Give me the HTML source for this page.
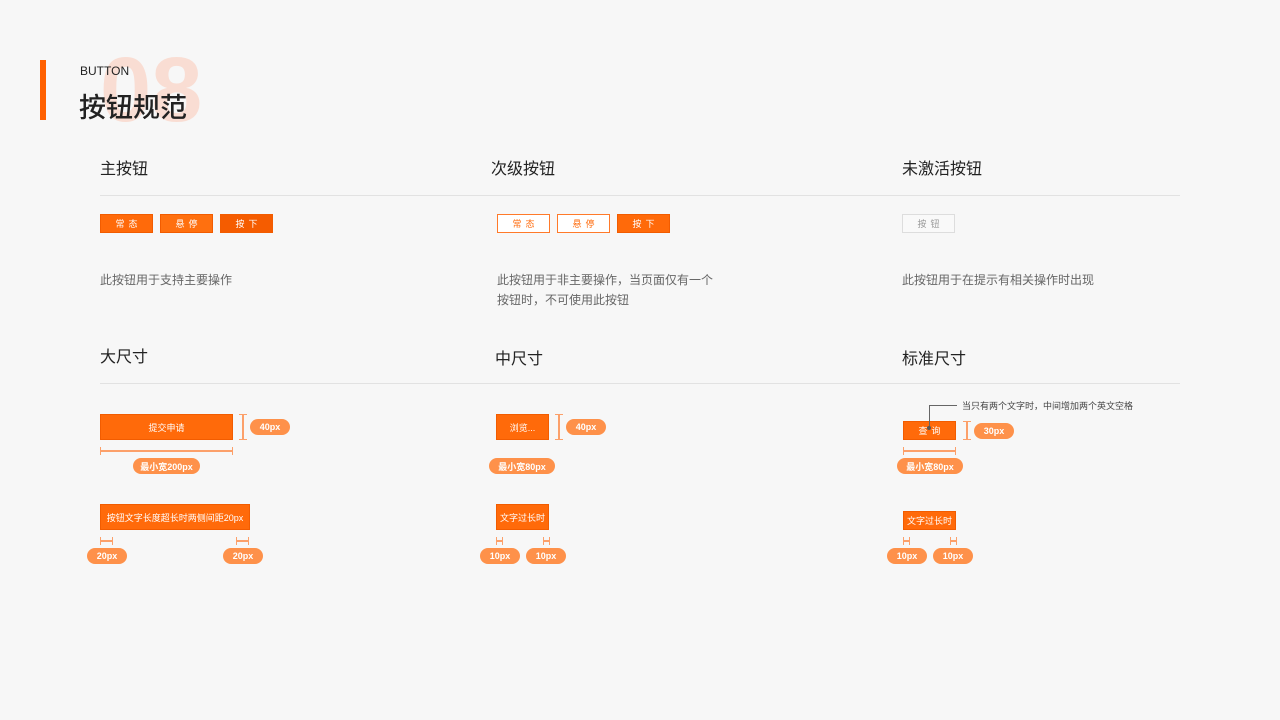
<!DOCTYPE html>
<html><head><meta charset="utf-8"><style>
body{margin:0;width:1280px;height:720px;background:#f7f7f7;position:relative;overflow:hidden;font-family:"Liberation Sans","Noto Sans CJK SC",sans-serif;}
.a{position:absolute;}
.t{font-size:16px;color:#222;}
.line{position:absolute;height:1px;background:#e2e2e2;}
.b{position:absolute;background:#ff6a0a;color:#fff;font-size:9px;display:flex;align-items:center;justify-content:center;box-sizing:border-box;border:1px solid #f25c00;white-space:nowrap;}
.o{position:absolute;border:1px solid #ff7a2a;color:#ff6a0a;font-size:9px;display:flex;align-items:center;justify-content:center;box-sizing:border-box;background:#fff;}
.w{letter-spacing:4px;padding-left:4px;}
.p{position:absolute;background:#fe914a;color:#fff;font-size:9px;border-radius:9px;display:flex;align-items:center;justify-content:center;font-weight:bold;}
.d{position:absolute;font-size:12px;color:#666;line-height:20px;}
.h{position:absolute;height:2px;background:#fca06a;}
.h:before,.h:after{content:"";position:absolute;top:-3px;width:1px;height:8px;background:#fca06a;}
.h:before{left:0}.h:after{right:0}
.v{position:absolute;width:2px;background:#fca06a;}
.v:before,.v:after{content:"";position:absolute;left:-3px;height:1px;width:8px;background:#fca06a;}
.v:before{top:0}.v:after{bottom:0}
</style></head><body>
<div class="a" style="left:40px;top:60px;width:6px;height:60px;background:#ff6000"></div>
<div class="a" style="left:100px;top:40px;font-size:92px;font-weight:bold;color:#f9ddd3;line-height:100px">08</div>
<div class="a" style="left:80px;top:64px;font-size:12px;color:#222">BUTTON</div>
<div class="a" style="left:79px;top:86px;font-size:27px;font-weight:500;color:#222">按钮规范</div>

<div class="a t" style="left:100px;top:155px">主按钮</div>
<div class="a t" style="left:491px;top:155px">次级按钮</div>
<div class="a t" style="left:902px;top:155px">未激活按钮</div>
<div class="line" style="left:100px;top:195px;width:1080px"></div>

<div class="b w" style="left:100px;top:214px;width:53px;height:19px">常态</div>
<div class="b w" style="left:160px;top:214px;width:53px;height:19px;background:#ff700f">悬停</div>
<div class="b w" style="left:220px;top:214px;width:53px;height:19px;background:#f55c00">按下</div>
<div class="o w" style="left:497px;top:214px;width:53px;height:19px">常态</div>
<div class="o w" style="left:557px;top:214px;width:53px;height:19px">悬停</div>
<div class="b w" style="left:617px;top:214px;width:53px;height:19px">按下</div>
<div class="o w" style="left:902px;top:214px;width:53px;height:19px;border-color:#ddd;color:#999;background:#f9f9f9">按钮</div>

<div class="d" style="left:100px;top:270px">此按钮用于支持主要操作</div>
<div class="d" style="left:497px;top:270px">此按钮用于非主要操作，当页面仅有一个<br>按钮时，不可使用此按钮</div>
<div class="d" style="left:902px;top:270px">此按钮用于在提示有相关操作时出现</div>

<div class="a t" style="left:100px;top:343px">大尺寸</div>
<div class="a t" style="left:495px;top:345px">中尺寸</div>
<div class="a t" style="left:902px;top:345px">标准尺寸</div>
<div class="line" style="left:100px;top:383px;width:1080px"></div>

<div class="b" style="left:100px;top:414px;width:133px;height:26px">提交申请</div>
<div class="v" style="left:242px;top:414px;height:26px"></div>
<div class="p" style="left:250px;top:419px;width:40px;height:16px">40px</div>
<div class="h" style="left:100px;top:450px;width:133px"></div>
<div class="p" style="left:133px;top:458px;width:67px;height:16px">最小宽200px</div>
<div class="b" style="left:100px;top:504px;width:150px;height:26px">按钮文字长度超长时两侧间距20px</div>
<div class="h" style="left:100px;top:540px;width:13px"></div>
<div class="h" style="left:236px;top:540px;width:13px"></div>
<div class="p" style="left:87px;top:548px;width:40px;height:16px">20px</div>
<div class="p" style="left:223px;top:548px;width:40px;height:16px">20px</div>

<div class="b" style="left:496px;top:414px;width:53px;height:26px">浏览...</div>
<div class="v" style="left:558px;top:414px;height:26px"></div>
<div class="p" style="left:566px;top:419px;width:40px;height:16px">40px</div>
<div class="p" style="left:489px;top:458px;width:66px;height:16px">最小宽80px</div>
<div class="b" style="left:496px;top:504px;width:53px;height:26px">文字过长时</div>
<div class="h" style="left:496px;top:540px;width:7px"></div>
<div class="h" style="left:543px;top:540px;width:7px"></div>
<div class="p" style="left:480px;top:548px;width:40px;height:16px">10px</div>
<div class="p" style="left:526px;top:548px;width:40px;height:16px">10px</div>

<div class="b w" style="left:903px;top:421px;width:53px;height:19px">查询</div>
<div class="a" style="left:929px;top:405px;width:28px;height:1px;background:#666"></div>
<div class="a" style="left:929px;top:405px;width:1px;height:22px;background:#666"></div>
<div class="a" style="left:927px;top:426px;width:4px;height:4px;border-radius:2px;background:#555"></div>
<div class="a" style="left:962px;top:399px;font-size:9px;color:#444">当只有两个文字时，中间增加两个英文空格</div>
<div class="v" style="left:966px;top:421px;height:19px"></div>
<div class="p" style="left:974px;top:423px;width:40px;height:16px">30px</div>
<div class="h" style="left:903px;top:450px;width:53px"></div>
<div class="p" style="left:897px;top:458px;width:66px;height:16px">最小宽80px</div>
<div class="b" style="left:903px;top:511px;width:53px;height:19px">文字过长时</div>
<div class="h" style="left:903px;top:540px;width:7px"></div>
<div class="h" style="left:950px;top:540px;width:7px"></div>
<div class="p" style="left:887px;top:548px;width:40px;height:16px">10px</div>
<div class="p" style="left:933px;top:548px;width:40px;height:16px">10px</div>
</body></html>
